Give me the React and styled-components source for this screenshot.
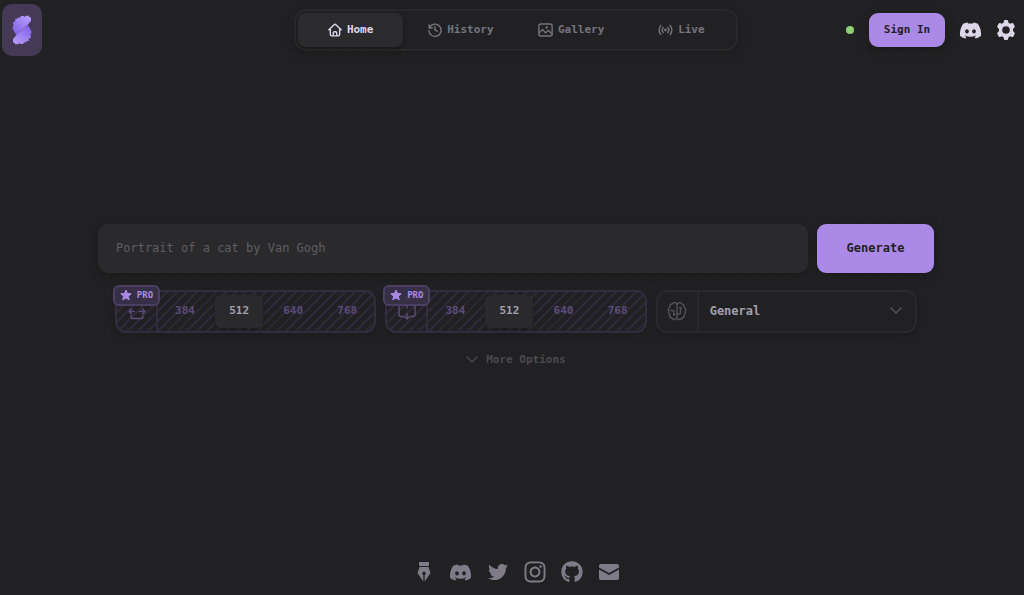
import React from "react";
import styled, { createGlobalStyle, css } from "styled-components";
import { FaDiscord, FaTwitter, FaInstagram, FaGithub } from "react-icons/fa";

//data
const TABS = [
  { name: "Home", icon: HomeIcon },
  { name: "History", icon: HistoryIcon },
  { name: "Gallery", icon: GalleryIcon },
  { name: "Live", icon: LiveIcon },
];
const SIZES = ["384", "512", "640", "768"];

const App = () => {
  const [prompt, setPrompt] = React.useState("");
  const [width, setWidth] = React.useState("512");
  const [height, setHeight] = React.useState("512");

  return (
    <>
      <GlobalStyle />
      <Page>
        <Header>
          <LogoLink href="#" aria-label="Home page">
            <Logo />
          </LogoLink>
          <Nav>
            {TABS.map(({ name, icon: Icon }) => (
              <Tab key={name} href={"#" + name} $active={name === "Home"}>
                <Icon />
                {name}
              </Tab>
            ))}
          </Nav>
          <Actions>
            <Status />
            <SignInBtn type="button">Sign In</SignInBtn>
            <IconLink href="#discord" aria-label="Discord">
              <FaDiscord size={23} />
            </IconLink>
            <IconBtn type="button" aria-label="Settings">
              <GearIcon />
            </IconBtn>
          </Actions>
        </Header>

        <Main>
          <Form onSubmit={(e) => e.preventDefault()}>
            <PromptRow>
              <PromptInput
                aria-label="Prompt"
                placeholder="Portrait of a cat by Van Gogh"
                value={prompt}
                onChange={(e) => setPrompt(e.target.value)}
              />
              <GenerateBtn>Generate</GenerateBtn>
            </PromptRow>
            <OptionRow>
              <SizePicker name="width" icon={<WidthIcon />} value={width} onPick={setWidth} />
              <SizePicker name="height" icon={<HeightIcon />} value={height} onPick={setHeight} />
              <Panel>
                <PanelIcon>
                  <BrainIcon />
                </PanelIcon>
                <ModelSelect aria-label="Model">
                  <option>General</option>
                </ModelSelect>
                <SelectArrow>
                  <Chevron />
                </SelectArrow>
              </Panel>
            </OptionRow>
            <MoreBtn type="button">
              <Chevron />
              More Options
            </MoreBtn>
          </Form>
        </Main>

        <Footer>
          <IconLink $dim href="#blog" aria-label="Blog">
            <PenIcon />
          </IconLink>
          <IconLink $dim href="#discord" aria-label="Discord">
            <FaDiscord size={23} />
          </IconLink>
          <IconLink $dim href="#twitter" aria-label="Twitter">
            <FaTwitter size={20} />
          </IconLink>
          <IconLink $dim href="#instagram" aria-label="Instagram">
            <FaInstagram size={24} />
          </IconLink>
          <IconLink $dim href="#github" aria-label="GitHub">
            <FaGithub size={22} />
          </IconLink>
          <IconLink $dim href="#mail" aria-label="Email">
            <MailIcon />
          </IconLink>
        </Footer>
      </Page>
    </>
  );
};
export default App;

const SizePicker = ({ name, icon, value, onPick }) => (
  <Panel as="fieldset" $pro aria-label={name}>
    <PanelIcon $pro>{icon}</PanelIcon>
    <Segments>
      {SIZES.map((size) => (
        <Segment key={size} $active={size === value}>
          <HiddenRadio
            type="radio"
            name={name}
            value={size}
            checked={size === value}
            onChange={() => onPick(size)}
          />
          {size}
        </Segment>
      ))}
    </Segments>
    <ProBadge>
      <StarIcon />
      PRO
    </ProBadge>
  </Panel>
);

//icons
function Logo() {
  const half =
    "M5.500 3.800 6 2.500 8 2.800 8.800 1h3l1 1 1-1.200h3l.7 1.400L19 2.800V6L15.500 10 4.500 20l-1-.3V18L1.800 17.300 2 15.500.7 14.500v-3L2 10.500 1 9.300 1.300 7 3.200 6.500V4z";
  return (
    <svg width="20" height="30" viewBox="0 0 20 30">
      <defs>
        <linearGradient id="logoHalf" x1="0.2" y1="1" x2="0.9" y2="0">
          <stop offset="0" stopColor="#8462ea" />
          <stop offset="1" stopColor="#b89cf9" />
        </linearGradient>
      </defs>
      <path fill="url(#logoHalf)" d={half} />
      <path fill="url(#logoHalf)" d={half} transform="rotate(180 10 15)" />
    </svg>
  );
}

function HomeIcon() {
  return (
    <Stroke width="14" height="14" viewBox="0 0 24 24">
      <path d="M1.500 11.500 10.500 3a2.200 2.200 0 0 1 3 0l9 8.500M4 10v9.500A2.500 2.500 0 0 0 6.500 22h11a2.500 2.500 0 0 0 2.500-2.500V10M9 22v-5a2 2 0 0 1 2-2h2a2 2 0 0 1 2 2v5" />
    </Stroke>
  );
}

function HistoryIcon() {
  return (
    <Stroke width="14" height="14" viewBox="0 0 24 24">
      <path d="M2 3v5.500h5.500M2.500 8A10.500 10.500 0 1 1 1.500 13M12 6.500V12l4 2" />
    </Stroke>
  );
}

function GalleryIcon() {
  return (
    <Stroke width="15" height="14" viewBox="0 0 26 24">
      <rect x="1.500" y="1.500" width="23" height="21" rx="3.500" />
      <path d="m2 17 6-6 5 6 5-4 6.500 6" />
      <circle cx="15" cy="7.500" r="1" />
    </Stroke>
  );
}

function LiveIcon() {
  return (
    <Stroke width="15" height="14" viewBox="0 0 26 24">
      <path d="M5 4a12 12 0 0 0 0 16M21 4a12 12 0 0 1 0 16M9 7.500a7 7 0 0 0 0 9M17 7.500a7 7 0 0 1 0 9" />
      <circle cx="13" cy="12" r="1.200" fill="currentColor" />
    </Stroke>
  );
}

function GearIcon() {
  return (
    <svg width="20" height="20" viewBox="0 0 20 20" fill="currentColor">
      <path
        fillRule="evenodd"
        d="M7.900 1Q8.100 0 9 0h2q.9 0 1.100 1l.4 1.800 1.600.9 1.800-.6q.9-.3 1.400.5l1.300 2.300q.5.900-.2 1.500L17 8.900v2.200l1.400 1.500q.7.600.2 1.500l-1.300 2.300q-.5.800-1.400.5l-1.800-.6-1.600.9-.4 1.800q-.2 1-1.100 1H9q-.9 0-1.100-1l-.4-1.800-1.600-.9-1.800.6q-.9.3-1.400-.5l-1.300-2.300q-.5-.9.2-1.500L3 11.100V8.900L1.600 7.400q-.7-.6-.2-1.500l1.300-2.300q.5-.8 1.400-.5l1.800.6 1.600-.9zM10 6.200a3.800 3.800 0 1 0 0 7.600 3.800 3.800 0 0 0 0-7.600z"
      />
    </svg>
  );
}

function WidthIcon() {
  return (
    <Stroke width="18" height="18" viewBox="0 0 18 18">
      <path d="M6.500 9.500H1M3.500 7 1 9.500 3.500 12M11.500 9.500H17M14.500 7 17 9.500 14.500 12M3 14v1A1.500 1.500 0 0 0 4.500 16.500h9A1.500 1.500 0 0 0 15 15v-1" />
    </Stroke>
  );
}

function HeightIcon() {
  return (
    <Stroke width="18" height="18" viewBox="0 0 18 18">
      <path d="M5 1H2.500A1.500 1.500 0 0 0 1 2.500v10.500A1.500 1.500 0 0 0 2.500 14.500H5M13 1h2.500A1.500 1.500 0 0 1 17 2.500v10.500a1.500 1.500 0 0 1-1.500 1.500H13M9 11.500V17M6.500 14.500 9 17 11.500 14.500M9 1v5" />
    </Stroke>
  );
}

function BrainIcon() {
  return (
    <Stroke width="20" height="20" viewBox="0 0 20 20">
      <path d="M10 3.500a2.500 2.500 0 0 0-4.500-.8A3 3 0 0 0 2.800 6 4 4 0 0 0 1.500 10a4 4 0 0 0 1.300 4 3.300 3.300 0 0 0 2.700 3.500 2.500 2.500 0 0 0 4.500-1zM10 3.500a2.500 2.500 0 0 1 4.500-.8A3 3 0 0 1 17.200 6a4 4 0 0 1 1.300 4 4 4 0 0 1-1.300 4 3.300 3.300 0 0 1-2.700 3.500 2.500 2.500 0 0 1-4.500-1z" />
      <path d="M3.500 9.500h2A1.500 1.500 0 0 1 7 11v2M10 13h2a1.500 1.500 0 0 0 1.500-1.500V7.500" />
      <circle cx="7" cy="13.500" r=".6" />
      <circle cx="13.500" cy="7" r=".6" />
    </Stroke>
  );
}

function Chevron() {
  return (
    <Stroke width="12" height="8" viewBox="0 0 12 8">
      <path d="m1 1 5 5 5-5" />
    </Stroke>
  );
}

function StarIcon() {
  return (
    <svg width="12" height="12" viewBox="0 0 24 24" fill="currentColor">
      <path
        stroke="currentColor"
        strokeWidth="2"
        strokeLinejoin="round"
        d="m12 2 3 6.800 7.400.7-5.600 4.900 1.700 7.300L12 17.900l-6.500 3.800 1.700-7.300L1.600 9.500 9 8.800z"
      />
    </svg>
  );
}

function PenIcon() {
  return (
    <svg width="14" height="20" viewBox="0 0 14 20" fill="currentColor">
      <path d="M2.500 0h9q.5 0 .5.500v3q0 .5-.5.500h-9Q2 4 2 3.500v-3Q2 0 2.500 0zM2.500 5h9L13.500 11 7.700 19.500V13a1.700 1.700 0 1 0-1.400 0v6.500L.5 11z" />
    </svg>
  );
}

function MailIcon() {
  return (
    <svg width="20" height="16" viewBox="0 0 20 16" fill="currentColor">
      <path d="M2 0h16a2 2 0 0 1 2 2v1.500L10 9 0 3.500V2a2 2 0 0 1 2-2zM0 5.500 10 11l10-5.500V14a2 2 0 0 1-2 2H2a2 2 0 0 1-2-2z" />
    </svg>
  );
}

//style
const GlobalStyle = createGlobalStyle`
  * {
    box-sizing: border-box;
  }
  body {
    margin: 0;
    background-color: #212123;
    color: #dcd6e8;
    font-family: "DejaVu Sans Mono", monospace;
    font-size: 11px;
    line-height: 16px;
  }
  button, input, select {
    font: inherit;
  }
`;

const dot = "#28282a 1px, transparent 1px";

const Page = styled.div`
  min-height: 100vh;
  padding-left: 8px;
  display: flex;
  flex-direction: column;
  background-image: radial-gradient(circle at 2px 17px, ${dot}),
    radial-gradient(circle at 21px 17px, ${dot}),
    radial-gradient(circle at 2px 36px, ${dot}),
    radial-gradient(circle at 21px 36px, ${dot});
  background-size: 37px 37px;
  background-position: 50% 0;
`;

const Stroke = styled.svg`
  flex: none;
  fill: none;
  stroke: currentColor;
  stroke-width: ${(p) => (p.viewBox.endsWith("24") ? 2.4 : 1.4)};
  stroke-linecap: round;
  stroke-linejoin: round;
`;

const Header = styled.header`
  height: 60px;
  display: grid;
  grid-template-columns: 1fr minmax(auto, 444px) 1fr;
  align-items: center;
`;

const LogoLink = styled.a`
  width: 40px;
  height: 52px;
  margin-left: -6px;
  display: flex;
  align-items: center;
  justify-content: center;
  border-radius: 10px;
  background: #443a55;
`;

const Nav = styled.nav`
  height: 42px;
  padding: 2px;
  display: flex;
  gap: 5px;
  border: 2px solid #29292b;
  border-radius: 13px;
  background: #212123;
  box-shadow: 0 3px 10px rgba(0, 0, 0, 0.15);
`;

const Tab = styled.a`
  flex: 1;
  display: flex;
  align-items: center;
  justify-content: center;
  gap: 5px;
  border-radius: 8px;
  color: #77737f;
  font-weight: bold;
  text-decoration: none;
  ${(p) =>
    p.$active &&
    css`
      background: #2b2b2d;
      color: #dcd6e8;
      box-shadow: 0 2px 5px rgba(0, 0, 0, 0.25);
    `}
`;

const Actions = styled.div`
  padding-right: 8px;
  display: flex;
  align-items: center;
  justify-content: flex-end;
  gap: 15px;
`;

const Status = styled.span`
  width: 8px;
  height: 8px;
  border-radius: 50%;
  background: #8fd077;
`;

const primary = css`
  border: none;
  border-radius: 9px;
  background: #aa8ae6;
  color: #212123;
  font-weight: bold;
  box-shadow: 0 3px 8px rgba(0, 0, 0, 0.25);
  cursor: pointer;
`;

const SignInBtn = styled.button`
  ${primary};
  width: 76px;
  height: 34px;
  padding: 0;
`;

const IconLink = styled.a`
  width: 21px;
  height: 24px;
  display: flex;
  align-items: center;
  justify-content: center;
  color: ${(p) => (p.$dim ? "#7f7b88" : "#dcd6e8")};
  svg {
    flex: none;
  }
`;

const IconBtn = styled.button`
  padding: 0;
  display: flex;
  border: none;
  background: none;
  color: #dcd6e8;
  cursor: pointer;
`;

const Main = styled.main`
  flex: 1;
  padding-bottom: 20px;
  display: flex;
  flex-direction: column;
  justify-content: center;
  align-items: center;
`;

const Form = styled.form`
  width: 100%;
  max-width: 836px;
  display: flex;
  flex-direction: column;
`;

const PromptRow = styled.div`
  display: flex;
  gap: 9px;
`;

const PromptInput = styled.input`
  flex: 1;
  min-width: 0;
  height: 49px;
  padding: 0 18px;
  border: none;
  border-radius: 10px;
  outline: none;
  background: #2a2a2c;
  color: #dcd6e8;
  font-size: 12px;
  box-shadow: 0 4px 10px rgba(0, 0, 0, 0.2);
  &::placeholder {
    color: #5f5d63;
    opacity: 1;
  }
`;

const GenerateBtn = styled.button`
  ${primary};
  width: 117px;
  font-size: 12px;
`;

const OptionRow = styled.div`
  margin-top: 17px;
  padding: 0 17px;
  display: flex;
  gap: 9px;
`;

const Panel = styled.div`
  position: relative;
  flex: 1;
  min-width: 0;
  height: 43px;
  margin: 0;
  padding: 0;
  display: flex;
  border: 2px solid ${(p) => (p.$pro ? "#332c40" : "#29292b")};
  border-radius: 11px;
  background: #212123;
  box-shadow: 0 3px 8px rgba(0, 0, 0, 0.15);
  ${(p) =>
    p.$pro &&
    css`
      background-image: repeating-linear-gradient(
        -45deg,
        transparent 0 5px,
        #2e2938 5px 7px
      );
    `}
`;

const PanelIcon = styled.div`
  width: 41px;
  flex: none;
  display: flex;
  align-items: center;
  justify-content: center;
  border-right: 2px solid ${(p) => (p.$pro ? "#332c40" : "#29292b")};
  color: ${(p) => (p.$pro ? "#5d4c7b" : "#545257")};
`;

const Segments = styled.div`
  flex: 1;
  display: flex;
`;

const Segment = styled.label`
  flex: 1;
  margin: 3px;
  display: flex;
  align-items: center;
  justify-content: center;
  border-radius: 6px;
  color: #5d4c7b;
  font-weight: bold;
  cursor: pointer;
  ${(p) =>
    p.$active &&
    css`
      background: #2a2a2c;
      color: #a39fac;
      box-shadow: 0 2px 4px rgba(0, 0, 0, 0.2);
    `}
`;

const HiddenRadio = styled.input`
  position: absolute;
  opacity: 0;
  pointer-events: none;
`;

const ProBadge = styled.span`
  position: absolute;
  top: -7px;
  left: -4px;
  width: 47px;
  height: 21px;
  display: flex;
  align-items: center;
  justify-content: center;
  gap: 5px;
  border: 2px solid #4c3f64;
  border-radius: 6px;
  background: #372f46;
  color: #aa8ae6;
  font-size: 9px;
  font-weight: bold;
`;

const ModelSelect = styled.select`
  flex: 1;
  min-width: 0;
  padding: 0 34px 0 11px;
  appearance: none;
  border: none;
  outline: none;
  background: none;
  color: #a39fac;
  font-size: 12px;
  font-weight: bold;
`;

const SelectArrow = styled.span`
  position: absolute;
  right: 13px;
  top: 0;
  bottom: 0;
  display: flex;
  align-items: center;
  color: #545257;
  pointer-events: none;
`;

const MoreBtn = styled.button`
  align-self: center;
  margin-top: 10px;
  height: 34px;
  padding: 0 12px;
  display: flex;
  align-items: center;
  gap: 8px;
  border: none;
  background: none;
  color: #4b494e;
  font-weight: bold;
  cursor: pointer;
`;

const Footer = styled.footer`
  padding-bottom: 11px;
  display: flex;
  justify-content: center;
  gap: 16px;
`;
